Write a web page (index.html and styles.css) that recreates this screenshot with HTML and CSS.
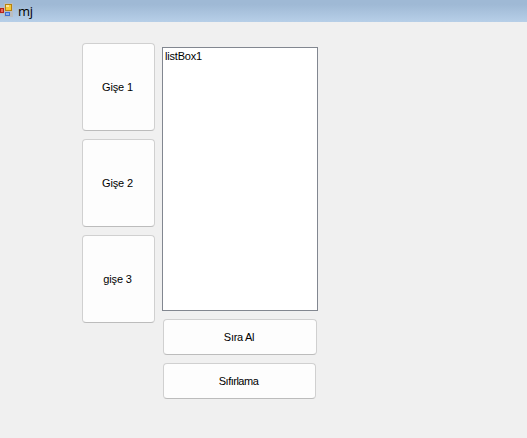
FILE: index.html
```html
<!DOCTYPE html>
<html lang="tr">
<head>
<meta charset="utf-8">
<title>mj</title>
<link rel="stylesheet" href="styles.css">
</head>
<body>
<header class="titlebar">
<svg class="app-icon" width="14" height="18" viewBox="0 0 14 18" shape-rendering="crispEdges">
<rect x="4" y="3" width="9" height="9" fill="#b9bdc1"/>
<rect x="0" y="7" width="5" height="7" fill="#b9bdc1"/>
<rect x="4" y="11" width="9" height="6" fill="#b9bdc1"/>
<rect x="5" y="4" width="7" height="7" fill="#b5820f"/><rect x="6" y="5" width="5" height="5" fill="#f6c93a"/><rect x="6" y="5" width="3" height="2" fill="#fbe59a"/>
<rect x="0" y="8" width="4" height="5" fill="#b5231c"/><rect x="1" y="9" width="2" height="3" fill="#e8665a"/>
<rect x="5" y="12" width="5" height="4" fill="#3f6fd0"/><rect x="6" y="13" width="3" height="2" fill="#8bb0f2"/>
</svg>
<span class="title">mj</span>
</header>
<main class="form">
<div class="counters">
<button class="btn counter">Gişe 1</button>
<button class="btn counter">Gişe 2</button>
<button class="btn counter">gişe 3</button>
</div>
<div class="queue">
<div class="listbox">listBox1</div>
<button class="btn take">Sıra Al</button>
<button class="btn reset">Sıfırlama</button>
</div>
</main>
</body>
</html>
```
FILE: styles.css
```css
* { box-sizing: border-box; }
body { margin: 0; height: 438px; overflow: hidden; background: #f0f0f0; color: #000; font: 11px "Liberation Sans", sans-serif; }
.titlebar { height: 22px; display: flex; background: linear-gradient(#9fb9d5 20%, #b7cfe8); }
.title { margin-left: 4px; font: 13px/22px "Open Sans", sans-serif; letter-spacing: -0.3px; }
.form { display: flex; padding: 21px 0 0 82px; }
.counters { display: flex; flex-direction: column; gap: 8px; width: 73px; }
.btn { display: block; padding: 0 2px 0 0; border: 1px solid #d0d0d0; border-bottom-color: #bcbcbc; border-radius: 4px; background: #fdfdfd; color: #000; font: inherit; letter-spacing: -0.15px; }
.counter { width: 73px; height: 88px; }
.take { letter-spacing: -0.3px; }
.reset { letter-spacing: -0.5px; }
.queue { margin: 4px 0 0 7px; width: 156px; }
.listbox { height: 264px; border: 1px solid #828790; background: #fff; padding-left: 2px; line-height: 16px; letter-spacing: -0.2px; }
.take { width: 154px; height: 36px; margin: 8px 0 0 1px; }
.reset { width: 153px; height: 36px; margin: 8px 0 0 1px; }
```
